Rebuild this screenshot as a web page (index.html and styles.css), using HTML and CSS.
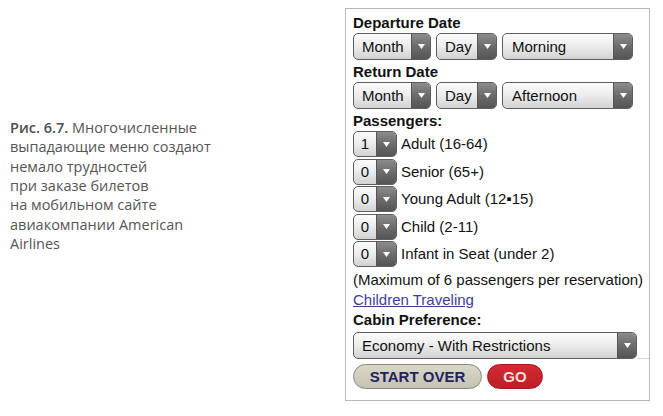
FILE: index.html
```html
<!DOCTYPE html>
<html lang="ru">
<head>
<meta charset="utf-8">
<link rel="stylesheet" href="styles.css">
</head>
<body>
<div class="page">
  <p class="caption"><span class="fig">Рис. 6.7.</span> Многочисленные<br>выпадающие меню создают<br>немало трудностей<br>при заказе билетов<br>на мобильном сайте<br>авиакомпании American<br>Airlines</p>

  <div class="form">
    <div class="label">Departure Date</div>
    <div class="row">
      <div class="sel w-month"><span class="val">Month</span><span class="arr"><svg width="7" height="5" viewBox="0 0 7 5"><path d="M0 0H7L3.5 5Z" fill="#fff"/></svg></span></div>
      <div class="sel w-day"><span class="val">Day</span><span class="arr"><svg width="7" height="5" viewBox="0 0 7 5"><path d="M0 0H7L3.5 5Z" fill="#fff"/></svg></span></div>
      <div class="sel w-time"><span class="val">Morning</span><span class="arr"><svg width="7" height="5" viewBox="0 0 7 5"><path d="M0 0H7L3.5 5Z" fill="#fff"/></svg></span></div>
    </div>

    <div class="label">Return Date</div>
    <div class="row">
      <div class="sel w-month"><span class="val">Month</span><span class="arr"><svg width="7" height="5" viewBox="0 0 7 5"><path d="M0 0H7L3.5 5Z" fill="#fff"/></svg></span></div>
      <div class="sel w-day"><span class="val">Day</span><span class="arr"><svg width="7" height="5" viewBox="0 0 7 5"><path d="M0 0H7L3.5 5Z" fill="#fff"/></svg></span></div>
      <div class="sel w-time"><span class="val">Afternoon</span><span class="arr"><svg width="7" height="5" viewBox="0 0 7 5"><path d="M0 0H7L3.5 5Z" fill="#fff"/></svg></span></div>
    </div>

    <div class="label">Passengers:</div>
    <div class="pax-list">
      <div class="pax"><div class="sel small"><span class="val">1</span><span class="arr"><svg width="7" height="5" viewBox="0 0 7 5"><path d="M0 0H7L3.5 5Z" fill="#fff"/></svg></span></div><span class="pax-text">Adult (16-64)</span></div>
      <div class="pax"><div class="sel small"><span class="val">0</span><span class="arr"><svg width="7" height="5" viewBox="0 0 7 5"><path d="M0 0H7L3.5 5Z" fill="#fff"/></svg></span></div><span class="pax-text">Senior (65+)</span></div>
      <div class="pax"><div class="sel small"><span class="val">0</span><span class="arr"><svg width="7" height="5" viewBox="0 0 7 5"><path d="M0 0H7L3.5 5Z" fill="#fff"/></svg></span></div><span class="pax-text">Young Adult (12▪15)</span></div>
      <div class="pax"><div class="sel small"><span class="val">0</span><span class="arr"><svg width="7" height="5" viewBox="0 0 7 5"><path d="M0 0H7L3.5 5Z" fill="#fff"/></svg></span></div><span class="pax-text">Child (2-11)</span></div>
      <div class="pax"><div class="sel small"><span class="val">0</span><span class="arr"><svg width="7" height="5" viewBox="0 0 7 5"><path d="M0 0H7L3.5 5Z" fill="#fff"/></svg></span></div><span class="pax-text">Infant in Seat (under 2)</span></div>
    </div>

    <div class="note">(Maximum of 6 passengers per reservation)</div>
    <div class="note"><a class="link" href="#">Children Traveling</a></div>
    <div class="label">Cabin Preference:</div>
    <div class="cabin-row">
      <div class="sel w-cabin"><span class="val">Economy - With Restrictions</span><span class="arr"><svg width="7" height="5" viewBox="0 0 7 5"><path d="M0 0H7L3.5 5Z" fill="#fff"/></svg></span></div>
      <div class="filler"></div>
    </div>
    <div class="buttons">
      <div class="btn start">START OVER</div>
      <div class="btn go">GO</div>
    </div>
  </div>
</div>
</body>
</html>
```

FILE: styles.css
```css
html, body {
  margin: 0;
  padding: 0;
  background: #ffffff;
}

.page {
  display: flex;
  align-items: flex-start;
  padding-left: 10px;
}

.caption {
  width: 335px;
  margin: 118px 0 0 0;
  font-family: "Open Sans", "Noto Sans", sans-serif;
  font-size: 14.5px;
  line-height: 19.33px;
  color: #555555;
}

.fig {
  font-weight: 600;
  color: #4d4d4d;
}

.form {
  width: 305px;
  box-sizing: border-box;
  margin-top: 8px;
  border: 1px solid #b8b8b8;
  padding: 4px 2px 11px 7px;
  font-family: "Liberation Sans", Arial, sans-serif;
  font-size: 15px;
  color: #111;
}

.label {
  font-weight: 700;
  line-height: 20px;
  height: 20px;
}

.row {
  display: flex;
  gap: 5px;
  margin-bottom: 2px;
}

.sel {
  display: flex;
  height: 27px;
  box-sizing: border-box;
  border: 1px solid #5e5e5e;
  border-radius: 5px;
  overflow: hidden;
  background: linear-gradient(#fbfbfb 0%, #eeeeee 45%, #d2d2d2 100%);
}

.val {
  flex: 1;
  padding-left: 8px;
  line-height: 25px;
  white-space: nowrap;
  color: #111;
}

.arr {
  width: 18px;
  flex: none;
  display: flex;
  align-items: center;
  justify-content: center;
  border-left: 1px solid #555;
  background: linear-gradient(#8c8c8c 0%, #6c6c6c 50%, #545454 100%);
}

.w-month { width: 78px; }
.w-day { width: 61px; }
.w-time { width: 131px; }
.w-time .val { padding-left: 9px; }
.w-cabin { width: 284px; }

.pax-list {
  display: flex;
  flex-direction: column;
  gap: 1.5px;
  margin-bottom: 3px;
}

.pax {
  display: flex;
  align-items: center;
  gap: 4px;
}

.sel.small {
  width: 44px;
  height: 26px;
}

.sel.small .val {
  padding-left: 0;
  text-align: center;
  line-height: 24px;
}

.sel.small .arr {
  width: 19px;
}

.pax-text {
  line-height: 20px;
}

.note {
  line-height: 20px;
  height: 20px;
  white-space: nowrap;
}

.link {
  color: #3c3c9c;
  text-decoration: underline;
}

.cabin-row {
  display: flex;
  margin-top: 2px;
  margin-right: -2px;
}

.filler {
  flex: 1;
  border-bottom: 1px solid #d4d4d4;
}

.buttons {
  display: flex;
  gap: 5px;
  margin-top: 5px;
}

.btn {
  height: 25px;
  box-sizing: border-box;
  border-radius: 13px;
  font-weight: 700;
  font-size: 15px;
  line-height: 23px;
  text-align: center;
}

.start {
  width: 129px;
  border: 1px solid #8a887c;
  background: linear-gradient(#d9d7c8, #c6c3b1);
  color: #23235f;
}

.go {
  width: 56px;
  border: 1px solid #a51a22;
  background: linear-gradient(#d42a33, #bf1d26);
  color: #f6dede;
}
```
